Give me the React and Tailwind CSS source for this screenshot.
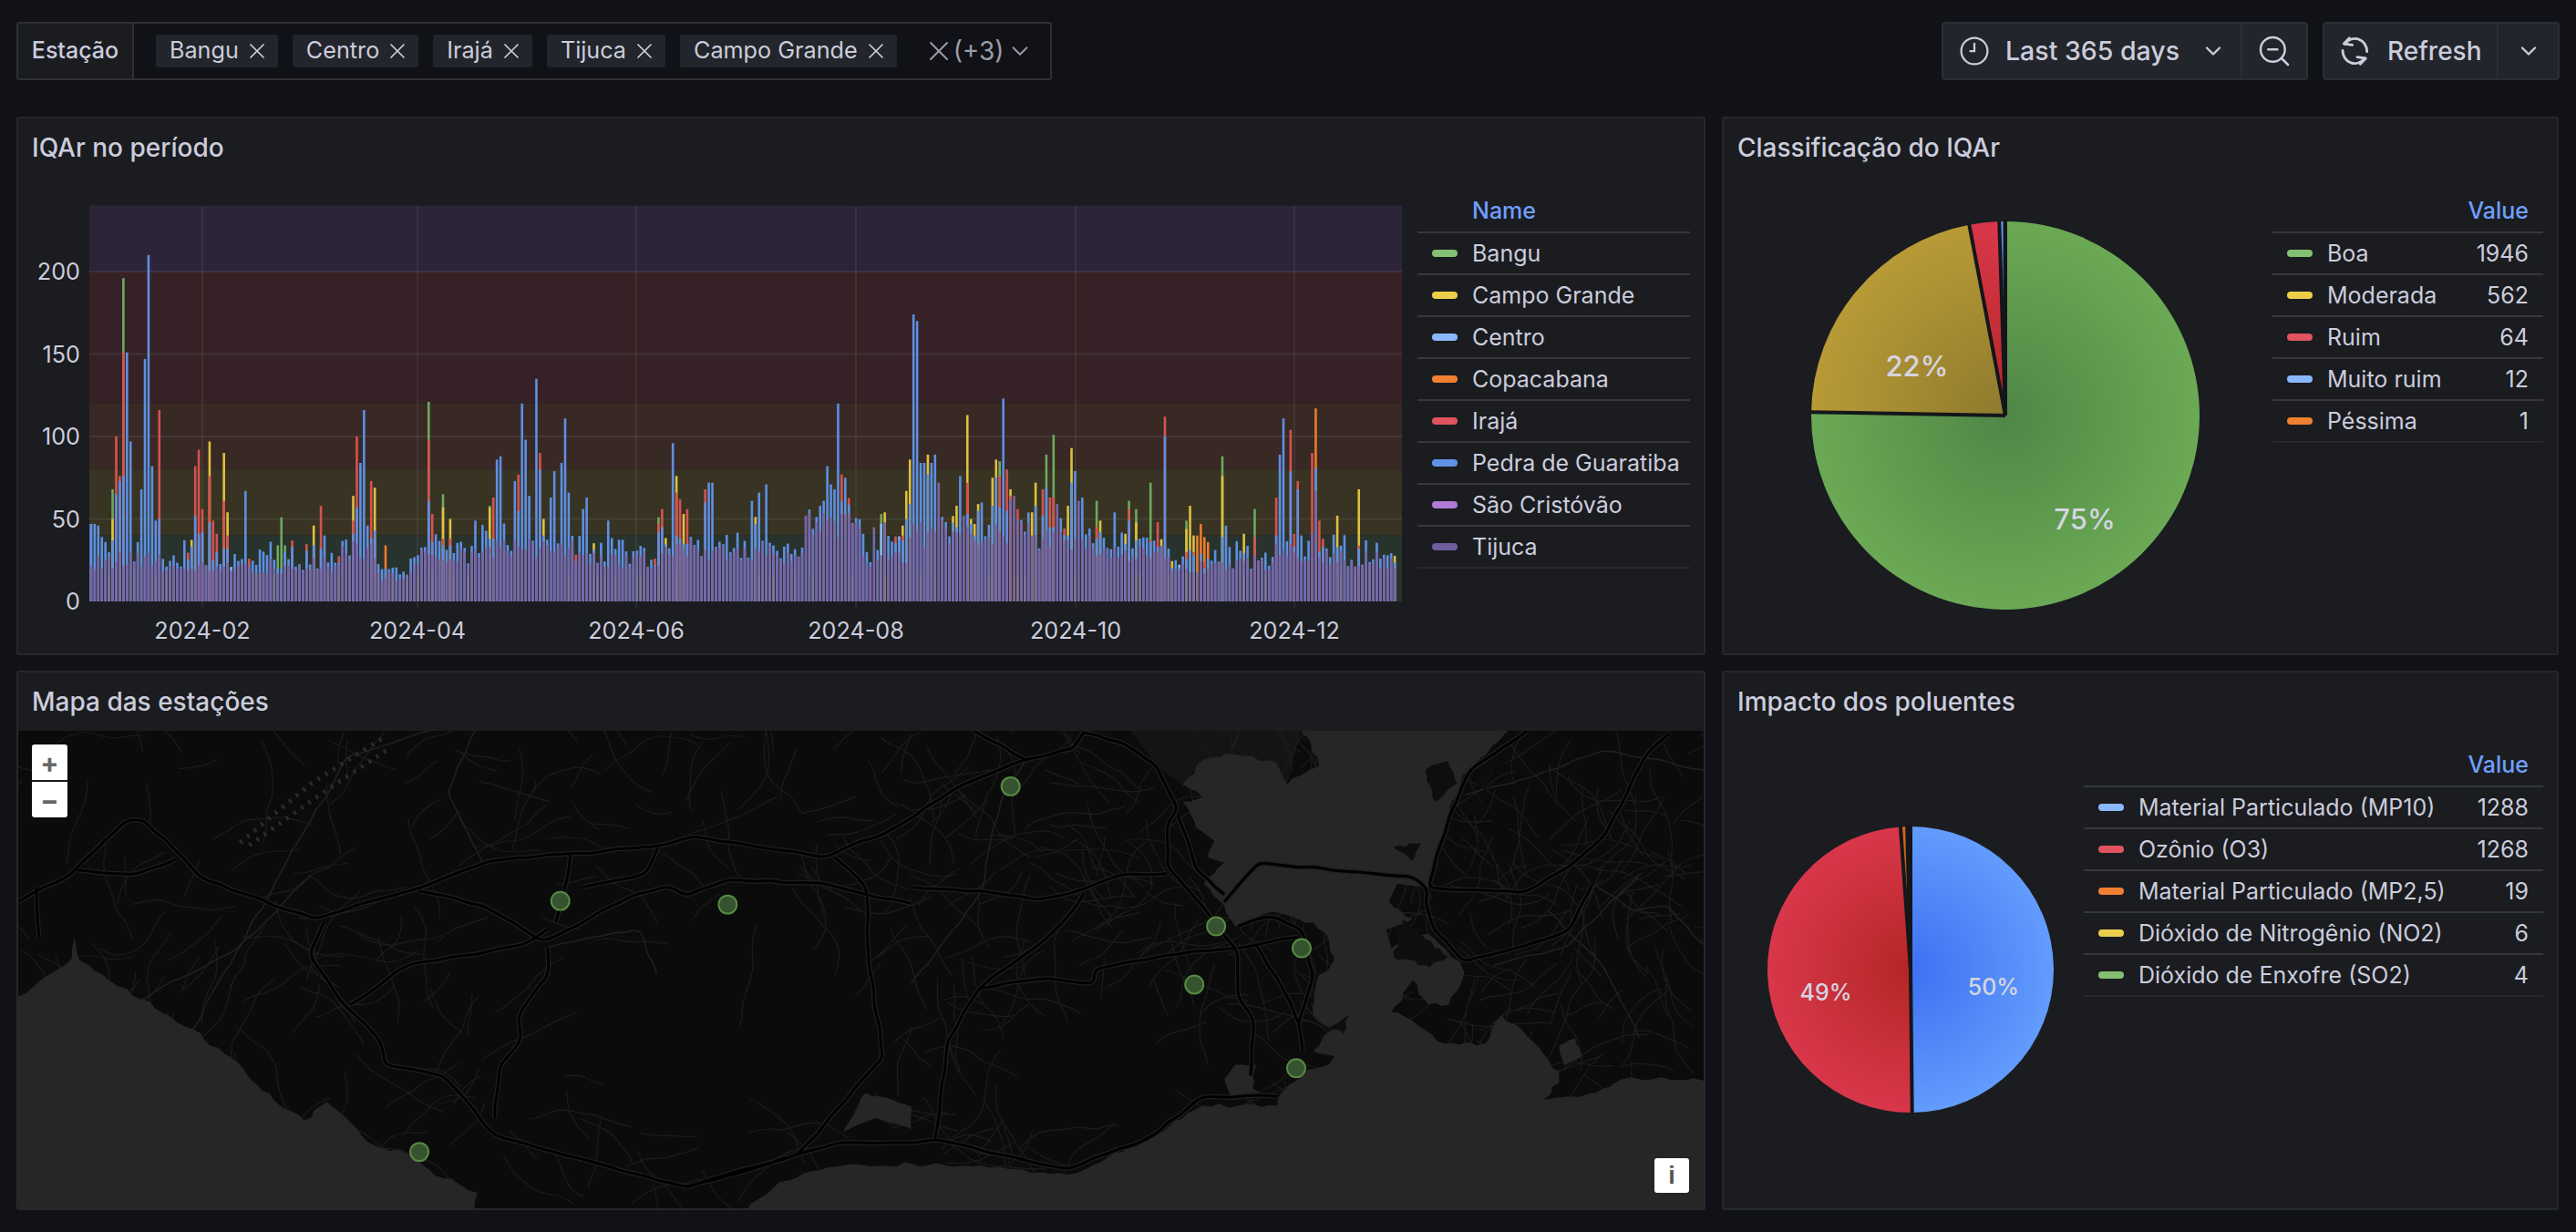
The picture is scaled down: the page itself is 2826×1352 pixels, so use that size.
import React from "react";
import { X, ChevronDown, ZoomOut } from "lucide-react";

const COLORS = {
  g: "#6fa85f",
  y: "#dfc03e",
  r: "#d5534f",
  b: "#5e8fe2",
  o: "#ec7c2c",
  l: "#86b4f8",
  p: "#7a66a9",
};

// tallest bars of the year, day of year -> color + value, tallest first
const PEAKS = {
  0: "l47 b47", 1: "b47", 2: "b46", 3: "b39", 4: "b36", 6: "g68 y50 b37", 7: "r100 b65", 8: "r76 b73", 9: "g196 r151 b76",
  10: "b151", 11: "b97", 14: "b68", 15: "b147", 16: "b210", 17: "b82", 18: "b49", 19: "r116 b50",
  29: "r82 b52", 30: "r92 b41", 31: "r56 b42", 33: "y97 r76 b48", 34: "r49 b25", 35: "r41 b30",
  37: "y90 r61 b32", 38: "y54 r40 b32", 43: "b67", 52: "g34 b20", 53: "g51 b20", 54: "g34 b30",
  62: "y46 b34", 64: "r58 b32", 65: "b40", 73: "y64 r49 b41", 74: "r100 b57", 75: "b84", 76: "b116",
  77: "b46", 78: "r73 b38", 79: "y69 b43", 82: "o34 b20", 94: "g121 r98 b61", 95: "r53 b36",
  98: "g65 y57 r38 b34", 100: "y50 r38 b34", 107: "b49", 111: "g58 y57 b38", 112: "r63 b38", 113: "b86", 114: "b88",
  118: "b73", 119: "r77 b55", 120: "b120", 121: "b98", 122: "b64", 124: "b135", 125: "r90 b80",
  126: "y50 b40", 128: "b63", 129: "b79", 131: "b84", 132: "b111", 133: "b66", 137: "b56", 138: "b63",
  144: "b49", 158: "g51 r47 b42", 159: "r56 b45", 162: "b96", 163: "y76 r66 b40", 164: "r62 b38",
  165: "y53 b35", 166: "r56 b35", 171: "r68 b60", 172: "b72", 173: "b72", 184: "b61", 186: "b66",
  188: "b71", 199: "p52", 201: "b44", 203: "b58", 204: "b61", 205: "b82", 206: "b71", 207: "b68",
  208: "b120", 209: "r77 b61", 210: "b75", 218: "p45", 220: "g53 l47", 221: "y54 p48", 226: "y46 r40 b37",
  227: "y67 b50", 228: "y86 b59", 229: "b174", 230: "b170", 231: "b84", 232: "b84", 233: "y89 b77",
  234: "b84", 235: "b89", 236: "p72", 241: "y58 b45", 242: "b76", 243: "p52", 244: "y113 r72 b53",
  245: "y50 b47", 246: "y47 b40", 247: "y59 b55", 248: "b60", 251: "y75 b58", 252: "y86 b75",
  253: "g85 r76 b57", 254: "b123", 255: "r80 b55", 256: "y68 r64 p62", 257: "p64", 258: "r56 p50",
  262: "y54 p40", 263: "y72 b58", 265: "r68 b52", 266: "g89 b69", 267: "r63 b45", 268: "g101 r63 b45",
  269: "p59", 272: "y58 b40", 273: "y93 b72", 274: "b79", 275: "p61", 276: "b63", 280: "g61 r45 b38",
  281: "y49 b42", 285: "b54", 288: "y41 b35", 289: "g61 r56 b49", 291: "g56 y48 b37", 295: "g72 r37 b36",
  297: "r48 b33", 299: "r112 b100", 305: "g49 y44 r30 b26", 306: "y58 b31", 307: "y40 r30 b28",
  308: "o40", 309: "o47 b29", 310: "o39 r24 b20", 311: "o36 b26", 315: "g88 y76 b39", 316: "b46",
  321: "y41 b29", 324: "g56 r39 p28", 330: "r63 b40", 331: "b89", 332: "b111", 334: "r104 b79",
  335: "r41 b33", 336: "r73 b68", 337: "b40", 340: "r90 p42", 341: "o117 b81 p67", 342: "r49 b30",
  343: "r38 b33", 347: "y52 b33", 353: "y68 r34 b32", 355: "b37",
};

const ENVELOPE = [
  [6, 24], [20, 25], [50, 20], [70, 22], [80, 30], [90, 15], [110, 27], [135, 32], [160, 25], [190, 31],
  [200, 25], [215, 44], [228, 25], [240, 41], [262, 40], [280, 38], [300, 29], [330, 22], [345, 29], [366, 25],
];

function rng(seed) {
  let s = seed;
  return () => {
    s = (s * 1664525 + 1013904223) % 4294967296;
    return s / 4294967296;
  };
}

const dayX = (d) => 98 + d * 3.94;
const valY = (v) => 660 - v * 1.81;

function buildBars() {
  const rand = rng(42);
  const bars = [];
  for (let d = 0; d < 364; d++) {
    const env = ENVELOPE.find((e) => d < e[0])[1];
    const base = env * (0.8 + rand() * 0.42);
    const extra = rand() * rand() * 18;
    const tip = rand();
    let segs;
    if (PEAKS[d]) {
      segs = PEAKS[d].split(" ").map((t) => [t[0], Number(t.slice(1))]);
      const last = segs[segs.length - 1];
      if (last[0] !== "p") segs.push(["p", Math.min(base, last[1] - 3)]);
    } else {
      segs = [["b", base + extra], ["p", base]];
      if (tip < 0.04) segs.unshift(["y", base + extra + 4]);
      else if (tip < 0.08) segs.unshift(["r", base + extra + 4]);
      else if (tip < 0.11) segs.unshift(["l", base + extra + 2]);
    }
    bars.push({ d, segs, stripe: rand() < 0.16 });
  }
  return bars;
}

const BARS = buildBars();

const BANDS = [
  [240, 200, "#2c2538"],
  [200, 120, "#362226"],
  [120, 80, "#382925"],
  [80, 40, "#383323"],
  [40, 0, "#29332d"],
];

const MONTHS = [
  ["2024-02", 222],
  ["2024-04", 458],
  ["2024-06", 698],
  ["2024-08", 939],
  ["2024-10", 1180],
  ["2024-12", 1420],
];

function BarChart() {
  return (
    <svg viewBox="18 194 1537 525" className="w-[1537px] h-[525px] shrink-0">
      {BANDS.map((b) => (
        <rect key={b[2]} x="98" y={valY(b[0])} width="1440" height={valY(b[1]) - valY(b[0])} fill={b[2]} />
      ))}
      {[50, 100, 150, 200].map((v) => (
        <line key={v} x1="98" x2="1538" y1={valY(v)} y2={valY(v)} stroke="#ffffff" strokeOpacity="0.09" strokeWidth="1.5" />
      ))}
      {MONTHS.map((m) => (
        <line key={m[0]} x1={m[1]} x2={m[1]} y1="226" y2="668" stroke="#ffffff" strokeOpacity="0.08" strokeWidth="1.5" />
      ))}
      {BARS.map((bar) =>
        bar.segs.map((s, i) => (
          <rect
            key={bar.d + "-" + i}
            x={dayX(bar.d) + 0.6}
            y={valY(s[1])}
            width="2.6"
            height={660 - valY(s[1])}
            fill={COLORS[s[0]]}
          />
        ))
      )}
      {BARS.filter((bar) => bar.stripe).map((bar) => (
        <rect key={bar.d} x={dayX(bar.d) + 1.2} y="630" width="1.4" height="30" fill="#8d7d80" opacity="0.7" />
      ))}
      {[0, 50, 100, 150, 200].map((v) => (
        <text key={v} x="88" y={valY(v) + 9} textAnchor="end" fontSize="25.2" fill="#ccccdc">
          {v}
        </text>
      ))}
      {MONTHS.map((m) => (
        <text key={m[0]} x={m[1]} y="701" textAnchor="middle" fontSize="25.2" fill="#ccccdc">
          {m[0]}
        </text>
      ))}
    </svg>
  );
}

function slicePath(cx, cy, r, a0, a1) {
  const pt = (a) => [cx + r * Math.sin(a), cy - r * Math.cos(a)];
  const [x0, y0] = pt(a0);
  const [x1, y1] = pt(a1);
  const large = a1 - a0 > Math.PI ? 1 : 0;
  return `M${cx} ${cy}L${x0} ${y0}A${r} ${r} 0 ${large} 1 ${x1} ${y1}Z`;
}

function Pie({ id, box, cx, cy, r, slices, labels, labelSize }) {
  const total = slices.reduce((sum, s) => sum + s.value, 0);
  let angle = 0;
  const parts = slices.map((s) => {
    const a0 = angle;
    angle += (s.value / total) * Math.PI * 2;
    return { ...s, a0, a1: angle };
  });
  return (
    <svg viewBox={box.join(" ")} style={{ width: box[2], height: box[3] }} className="shrink-0">
      <defs>
        {parts.map((p, i) => (
          <radialGradient key={i} id={id + i} gradientUnits="userSpaceOnUse" cx={cx} cy={cy} r={r}>
            <stop offset="0" stopColor={p.inner} />
            <stop offset="1" stopColor={p.outer} />
          </radialGradient>
        ))}
      </defs>
      {parts.map((p, i) => (
        <path key={i} d={slicePath(cx, cy, r, p.a0, p.a1)} fill={`url(#${id}${i})`} />
      ))}
      {parts.map((p, i) => (
        <line
          key={i}
          x1={cx}
          y1={cy}
          x2={cx + (r + 2) * Math.sin(p.a0)}
          y2={cy - (r + 2) * Math.cos(p.a0)}
          stroke="#14161a"
          strokeWidth="4"
        />
      ))}
      {labels.map((l) => (
        <text key={l[0]} x={l[1]} y={l[2]} textAnchor="middle" fontSize={labelSize} fontWeight="500" fill="#d5d5e0">
          {l[0]}
        </text>
      ))}
    </svg>
  );
}

function Legend({ width, header, rows }) {
  return (
    <div className="text-[25px] leading-none text-[#ccccdc] mt-[15px]" style={{ width }}>
      <div className="h-[47px] flex items-center border-b-2 border-[#36383e] pr-[16px] font-medium text-[#6e9fff]">
        {header === "Name" ? <span className="pl-[60px]">Name</span> : <span className="ml-auto">Value</span>}
      </div>
      {rows.map((row, i) => (
        <div
          key={row.name}
          className={
            "h-[46px] flex items-center pl-[16px] pr-[16px] whitespace-nowrap border-b-2 " +
            (i === rows.length - 1 ? "border-[#28292e]" : "border-[#36383e]")
          }
        >
          <span className="w-[28px] h-[8px] rounded-[4px] mr-[16px] shrink-0" style={{ background: row.color }} />
          <span>{row.name}</span>
          {row.value && <span className="ml-auto">{row.value}</span>}
        </div>
      ))}
    </div>
  );
}

// breaks a traced polyline into short wobbly steps so it reads like a real road or shore
function wobble(path, amp, step, seed, smooth) {
  const rand = rng(seed);
  return path
    .split("M")
    .filter(Boolean)
    .map((line) => {
      const pts = line
        .split("L")
        .map((p) => p.trim().split(" ").map(Number));
      const out = [pts[0]];
      for (let i = 1; i < pts.length; i++) {
        const [ax, ay] = pts[i - 1];
        const [bx, by] = pts[i];
        const len = Math.hypot(bx - ax, by - ay);
        const n = Math.max(1, Math.round(len / step));
        for (let k = 1; k <= n; k++) {
          const t = k / n;
          const j = k === n ? 0 : amp;
          out.push([ax + (bx - ax) * t + (rand() - 0.5) * j, ay + (by - ay) * t + (rand() - 0.5) * j]);
        }
      }
      let d = `M${out[0][0].toFixed(1)} ${out[0][1].toFixed(1)}`;
      for (let i = 1; i < out.length; i++) {
        if (smooth && i < out.length - 1) {
          const mx = (out[i][0] + out[i + 1][0]) / 2;
          const my = (out[i][1] + out[i + 1][1]) / 2;
          d += `Q${out[i][0].toFixed(1)} ${out[i][1].toFixed(1)} ${mx.toFixed(1)} ${my.toFixed(1)}`;
        } else {
          d += `L${out[i][0].toFixed(1)} ${out[i][1].toFixed(1)}`;
        }
      }
      return d;
    })
    .join("");
}

const WATER = wobble(
  "M10 1100L18 1094L77 1052L80 1030L85 1054L96 1060L128 1083L153 1097L210 1130L265 1173L281 1191L312 1218L332 1230L357 1210L383 1232L408 1257L446 1267L485 1294L523 1310L517 1335L810 1335L855 1298L918 1281L1000 1278L1057 1280L1115 1284L1172 1290L1201 1279L1258 1251L1298 1228L1321 1214L1402 1214L1410 1197L1430 1177L1459 1169L1465 1160L1442 1154L1453 1138L1482 1115L1460 1128L1442 1115L1445 1080L1465 1052L1459 1033L1442 1013L1396 1001L1356 1017L1344 994L1321 970L1344 947L1325 940L1333 923L1313 908L1298 880L1320 875L1298 861L1321 834L1356 828L1402 838L1413 861L1448 841L1428 795L1665 795L1614 845L1603 861L1591 896L1574 943L1568 974L1534 970L1525 990L1551 1009L1522 1021L1528 1041L1568 1025L1603 1056L1608 1068L1591 1103L1568 1103L1551 1076L1528 1111L1557 1126L1586 1146L1631 1146L1649 1115L1677 1138L1712 1177L1712 1189L1695 1208L1752 1200L1781 1185L1880 1185L1880 1345L10 1345",
  5,
  9,
  3,
  false
);

const LAGOONS = wobble(
  "M925 1243L950 1200L1000 1215L1000 1240L960 1228L925 1243M1344 1185L1356 1169L1379 1169L1375 1195L1385 1204L1350 1204L1344 1185M1712 1148L1730 1140L1737 1160L1718 1170L1712 1148",
  3,
  7,
  5,
  false
);

const ISLANDS = wobble(
  "M1565 845L1590 835L1600 860L1575 880L1565 845M1620 860L1640 840L1632 870L1620 860M1530 930L1560 925L1550 945L1530 930M1460 1130L1480 1115L1475 1135L1460 1130M1540 1010L1590 1050L1570 1062L1530 1050L1540 1010",
  4,
  6,
  9,
  false
);

const MAIN_ROADS = wobble(
  [
    "M18 990L77 959L137 900L156 900L223 966L344 1009L472 970L536 945L721 929L759 918L906 941L976 912L1057 861L1123 834L1178 822L1189 804",
    "M915 941L950 974L953 1052L969 1161L874 1269L753 1304L670 1282L542 1247L485 1181L421 1169L415 1142L376 1103L338 1048L354 1013",
    "M459 978L529 994L593 1033L631 1017L695 982L733 972L753 984L797 966L906 970L950 982L1000 992",
    "M625 939L619 974L609 1012M638 974L708 959L721 931",
    "M383 1103L446 1060L574 1037L600 1020",
    "M600 1040L600 1072L568 1115L571 1142L548 1169L542 1228",
    "M753 1304L918 1255L1000 1255L1026 1251L1172 1284L1258 1251L1321 1204L1402 1204",
    "M38 974L41 1029M83 955L147 960L191 943",
    "M1069 802L1126 834M1189 804L1230 814L1270 841L1293 888L1281 904L1281 951L1316 990L1359 1044L1359 1095L1376 1119L1373 1181",
    "M1293 896L1313 955L1344 982",
    "M1344 990L1382 947L1551 962L1568 976L1565 990L1574 1021L1608 1056L1672 1039L1723 1021L1749 970",
    "M1677 802L1614 845L1591 896L1568 974L1672 980L1718 955L1763 916L1809 826L1832 806",
    "M1000 974L1077 978L1138 988L1184 978L1235 959L1281 959",
    "M1166 1013L1138 1039L1075 1085L1040 1142L1026 1251",
    "M1166 1013L1189 982M1356 1041L1310 1044L1201 1064L1201 1080L1149 1074L1075 1085",
    "M1359 1017L1396 1005L1430 1021L1442 1072L1425 1122L1430 1154",
    "M1359 1041L1425 1029M1379 1037L1416 1099L1425 1122",
  ].join(""),
  3,
  16,
  11,
  true
);

const THIN_ROADS = wobble(
  [
    "M1608 873L1683 853L1758 824L1804 832L1871 845",
    "M1749 970L1792 1001L1832 994L1871 1037",
    "M1000 1080L1077 978L1098 880L1126 834",
    "M600 1040L700 1020L720 1070",
    "M210 1130L300 970L380 830L470 802",
    "M150 1100L260 1040L340 960",
    "M520 802L490 870L530 950",
    "M1700 1000L1760 1060L1800 1140",
    "M1640 1060L1720 1040L1800 960",
  ].join(""),
  4,
  14,
  13,
  true
);

// massifs and forest where no streets show
const EMPTY = [
  [790, 1130, 190, 110],
  [1210, 1180, 130, 95],
  [1120, 870, 40, 30],
  [95, 880, 70, 50],
];

function buildStreets() {
  const rand = rng(7);
  const out = [];
  for (let i = 0; i < 700; i++) {
    const dense = i % 3 !== 0;
    let x = dense ? 1000 + rand() * 870 : 20 + rand() * 980;
    let y = 802 + rand() * 500;
    let dir = rand() * Math.PI * 2;
    const pts = [[x, y]];
    const empty = EMPTY.some((e) => ((x - e[0]) / e[2]) ** 2 + ((y - e[1]) / e[3]) ** 2 < 1);
    if (empty) continue;
    const steps = 3 + Math.floor(rand() * 5);
    for (let s = 0; s < steps; s++) {
      dir += (rand() - 0.5) * 1.1;
      x += Math.cos(dir) * 18;
      y += Math.sin(dir) * 18;
      pts.push([x, y]);
    }
    let d = `M${pts[0][0].toFixed(0)} ${pts[0][1].toFixed(0)}`;
    for (let k = 1; k < pts.length - 1; k++) {
      const mx = (pts[k][0] + pts[k + 1][0]) / 2;
      const my = (pts[k][1] + pts[k + 1][1]) / 2;
      d += `Q${pts[k][0].toFixed(0)} ${pts[k][1].toFixed(0)} ${mx.toFixed(0)} ${my.toFixed(0)}`;
    }
    out.push(d);
  }
  return out;
}

const STREETS = buildStreets();

const STATIONS = [
  [1109, 863],
  [614, 989],
  [798, 993],
  [1335, 1017],
  [1429, 1041],
  [1311, 1081],
  [1423, 1173],
  [459, 1265],
];

function MapView() {
  return (
    <div className="relative flex-1 overflow-hidden rounded-b-[3px] bg-[#0b0b0b]">
      <svg viewBox="18 802 1853 525" className="w-full h-full block" preserveAspectRatio="none">
        <path d="M1241 802L1428 802L1413 861L1356 828L1321 834L1298 861L1270 841Z" fill="#141414" />
        <path d={STREETS.join("")} fill="none" stroke="#1c1c1c" strokeWidth="1.2" />
        <path d={THIN_ROADS} fill="none" stroke="#202020" strokeWidth="1.6" strokeLinejoin="round" />
        <path d="M262 925L340 860L422 808M272 928L350 872L428 820" fill="none" stroke="#2a2a2a" strokeWidth="5" strokeDasharray="3 7" />
        <path d={WATER} fill="#262626" />
        <path d={LAGOONS} fill="#262626" />
        <path d={ISLANDS} fill="#0e0e0e" />
        <path d={MAIN_ROADS} fill="none" stroke="#1f1f1f" strokeWidth="5.5" strokeLinejoin="round" />
        <path d={MAIN_ROADS} fill="none" stroke="#000000" strokeWidth="3" strokeLinejoin="round" />
        {STATIONS.map((s) => (
          <circle key={s[0]} cx={s[0]} cy={s[1]} r="10" fill="#36522f" stroke="#568b43" strokeWidth="2" />
        ))}
      </svg>
      <div className="absolute left-[15px] top-[15px] w-[39px] h-[80px] bg-white rounded-[3px] flex flex-col text-[#666666] font-bold">
        <div className="h-[41px] flex items-center justify-center border-b-2 border-[#1a1a1a] text-[30px] leading-none">+</div>
        <div className="flex-1 flex items-center justify-center text-[30px] leading-none">−</div>
      </div>
      <div className="absolute right-[16px] bottom-[17px] w-[38px] h-[38px] bg-white rounded-[3px] flex items-center justify-center text-[#555555] font-bold text-[27px] leading-none font-['Liberation_Sans',sans-serif]">
        i
      </div>
    </div>
  );
}

function Panel({ title, children }) {
  return (
    <div className="flex flex-col rounded-[3px] border-2 border-[#26282d] bg-[#1a1c20] overflow-hidden min-h-0">
      <div className="h-[64px] shrink-0 flex items-center pl-[15px] text-[28px] font-medium text-[#ccccdc]">{title}</div>
      {children}
    </div>
  );
}

function Chip({ label }) {
  return (
    <div className="h-[36px] flex items-center gap-[12px] px-[15px] rounded-[3px] bg-[#22252b] text-[#ccccdc]">
      <span>{label}</span>
      <X size={28} strokeWidth={1.5} className="-mx-[6px]" />
    </div>
  );
}

function ClockIcon() {
  return (
    <svg width="36" height="36" viewBox="0 0 24 24" fill="none" stroke="#ccccdc" strokeWidth="1.5" strokeLinecap="round" className="-mx-[3px]">
      <circle cx="12" cy="12" r="9.6" />
      <path d="M12 6.5V12H9" />
    </svg>
  );
}

function SyncIcon() {
  return (
    <svg width="50" height="40" viewBox="0 0 150 120" fill="none" stroke="#ccccdc" strokeWidth="8.5" strokeLinecap="round" strokeLinejoin="round">
      <path d="M110 62A40 42 0 0 0 38 36" />
      <path d="M52 17L34 36L62 40" />
      <path d="M30 58A40 42 0 0 0 102 84" />
      <path d="M88 103L106 84L78 80" />
    </svg>
  );
}

const STATIONS_LEGEND = [
  { name: "Bangu", color: "#85bf73" },
  { name: "Campo Grande", color: "#ecd04a" },
  { name: "Centro", color: "#8ab8ff" },
  { name: "Copacabana", color: "#f08030" },
  { name: "Irajá", color: "#e0535f" },
  { name: "Pedra de Guaratiba", color: "#5f93e8" },
  { name: "São Cristóvão", color: "#b07ad6" },
  { name: "Tijuca", color: "#6f5d9e" },
];

const CLASS_LEGEND = [
  { name: "Boa", value: "1946", color: "#85bf73" },
  { name: "Moderada", value: "562", color: "#ecd04a" },
  { name: "Ruim", value: "64", color: "#e0535f" },
  { name: "Muito ruim", value: "12", color: "#8ab8ff" },
  { name: "Péssima", value: "1", color: "#f08030" },
];

const POLLUTANT_LEGEND = [
  { name: "Material Particulado (MP10)", value: "1288", color: "#8ab8ff" },
  { name: "Ozônio (O3)", value: "1268", color: "#e0535f" },
  { name: "Material Particulado (MP2,5)", value: "19", color: "#f08030" },
  { name: "Dióxido de Nitrogênio (NO2)", value: "6", color: "#ecd04a" },
  { name: "Dióxido de Enxofre (SO2)", value: "4", color: "#85bf73" },
];

const GREEN = { inner: "#4f8746", outer: "#6ba955" };
const YELLOW = { inner: "#8e7a2e", outer: "#b89a36" };
const RED = { inner: "#b42725", outer: "#d8374a" };
const BLUE = { inner: "#3d70f3", outer: "#629cfc" };
const ORANGE = { inner: "#a85a1c", outer: "#d0661f" };

export default function App() {
  return (
    <div className="min-h-screen w-full bg-[#111217] font-['Inter',sans-serif] text-[25.2px] pt-[24px] px-[18px] text-[#ccccdc]">
      <div className="flex justify-between h-[64px]">
        <div className="flex">
          <div className="w-[129px] flex items-center justify-center font-medium bg-[#1a1c20] border-2 border-[#2e3036] rounded-l-[3px] text-[25px]">
            Estação
          </div>
          <div className="w-[1007px] flex items-center pl-[24px] gap-[16px] border-2 border-l-0 border-[#2e3036] rounded-r-[3px]">
            <Chip label="Bangu" />
            <Chip label="Centro" />
            <Chip label="Irajá" />
            <Chip label="Tijuca" />
            <Chip label="Campo Grande" />
            <div className="flex items-center ml-[21px] text-[#9b9ca6] text-[28px]">
              <X size={36} strokeWidth={1.3} className="-mx-[9px]" />
              <span className="ml-[7px]">(+3)</span>
              <ChevronDown size={30} strokeWidth={1.5} className="-mx-[7px] ml-[2px]" />
            </div>
          </div>
        </div>
        <div className="flex gap-[16px]">
          <div className="flex bg-[#22252b] border-2 border-[#2c2e35] rounded-[4px] font-medium text-[28.5px]">
            <div className="w-[328px] flex items-center pl-[19px] border-r-2 border-[#2c2e35]">
              <ClockIcon />
              <span className="ml-[19px]">Last 365 days</span>
              <ChevronDown size={28} className="ml-[23px]" />
            </div>
            <div className="w-[70px] flex items-center justify-center">
              <ZoomOut size={40} strokeWidth={1.5} />
            </div>
          </div>
          <div className="flex font-medium text-[28px]">
            <div className="w-[193px] flex items-center pl-[10px] bg-[#22252b] border-2 border-[#2c2e35] rounded-l-[4px]">
              <SyncIcon />
              <span className="ml-[9px]">Refresh</span>
            </div>
            <div className="w-[67px] flex items-center justify-center bg-[#22252b] border-2 border-l-0 border-[#2c2e35] rounded-r-[4px]">
              <ChevronDown size={28} />
            </div>
          </div>
        </div>
      </div>

      <div className="grid grid-cols-[1853px_918px] grid-rows-[591px_592px] gap-x-[18px] gap-y-[17px] mt-[40px]">
        <Panel title="IQAr no período">
          <div className="flex flex-1 -ml-[2px]">
            <BarChart />
            <Legend width={299} header="Name" rows={STATIONS_LEGEND} />
          </div>
        </Panel>
        <Panel title="Classificação do IQAr">
          <div className="flex flex-1 -ml-[2px]">
            <Pie
              id="cls"
              box={[1889, 194, 604, 525]}
              cx={2200}
              cy={456}
              r={213}
              slices={[
                { value: 1946, ...GREEN },
                { value: 562, ...YELLOW },
                { value: 64, ...RED },
                { value: 12, ...BLUE },
                { value: 1, ...ORANGE },
              ]}
              labels={[["22%", 2103, 413], ["75%", 2287, 581]]}
              labelSize={31}
            />
            <Legend width={297} header="Value" rows={CLASS_LEGEND} />
          </div>
        </Panel>
        <Panel title="Mapa das estações">
          <MapView />
        </Panel>
        <Panel title="Impacto dos poluentes">
          <div className="flex flex-1 -ml-[2px]">
            <Pie
              id="pol"
              box={[1889, 802, 397, 525]}
              cx={2096}
              cy={1064}
              r={157}
              slices={[
                { value: 1288, ...BLUE },
                { value: 1268, ...RED },
                { value: 19, ...ORANGE },
                { value: 6, ...YELLOW },
                { value: 4, ...GREEN },
              ]}
              labels={[["50%", 2187, 1092], ["49%", 2003, 1098]]}
              labelSize={25}
            />
            <Legend width={504} header="Value" rows={POLLUTANT_LEGEND} />
          </div>
        </Panel>
      </div>
    </div>
  );
}
